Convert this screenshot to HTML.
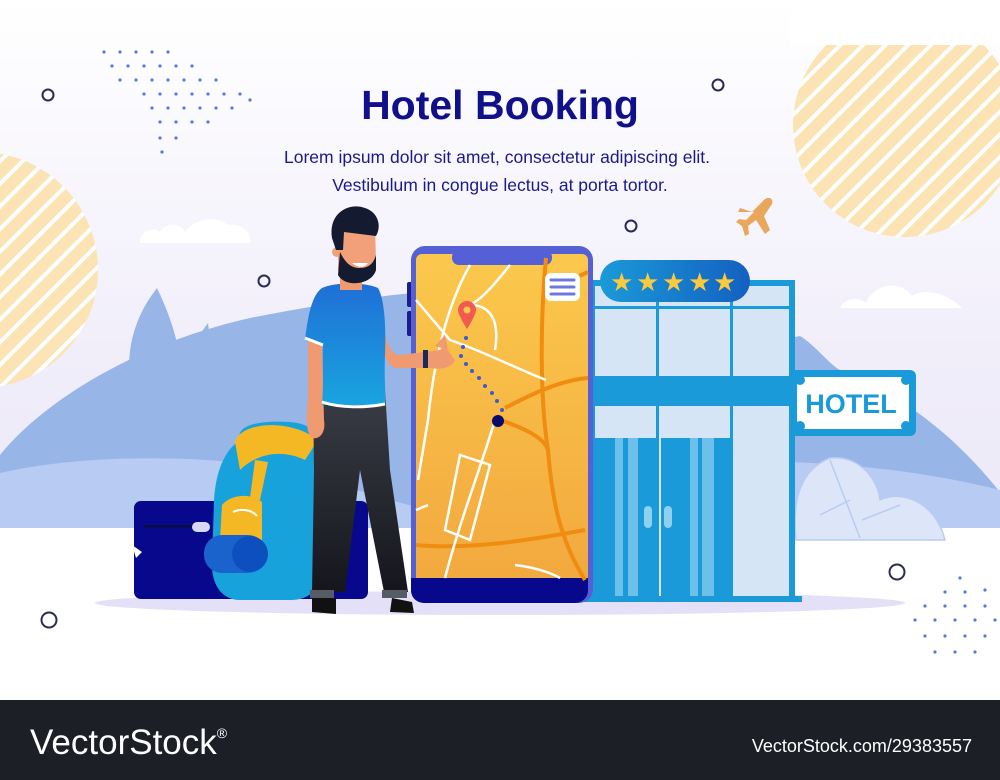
<!DOCTYPE html>
<html><head><meta charset="utf-8"><style>
html,body{margin:0;padding:0;width:1000px;height:780px;overflow:hidden;background:#fff}
svg{display:block}
</style></head><body>
<svg width="1000" height="780" viewBox="0 0 1000 780" xmlns="http://www.w3.org/2000/svg">
<defs>
<linearGradient id="bg" x1="0" y1="0" x2="0" y2="1">
<stop offset="0" stop-color="#ffffff"/><stop offset="0.5" stop-color="#f1eefa"/><stop offset="1" stop-color="#e8e4f6"/></linearGradient>
<pattern id="stripes" width="16" height="16" patternUnits="userSpaceOnUse" patternTransform="rotate(45)">
<rect width="16" height="16" fill="#fbe3b4"/><rect width="4" height="16" fill="#fff"/></pattern>
<linearGradient id="map" x1="0" y1="0" x2="0" y2="1"><stop offset="0" stop-color="#fbc84c"/><stop offset="1" stop-color="#f2a83e"/></linearGradient>
<linearGradient id="shirt" x1="0" y1="0" x2="0" y2="1"><stop offset="0" stop-color="#1f6fd6"/><stop offset="1" stop-color="#19a4e0"/></linearGradient>
<linearGradient id="pants" x1="0" y1="0" x2="0" y2="1"><stop offset="0" stop-color="#3a3d47"/><stop offset="1" stop-color="#15161c"/></linearGradient>
<linearGradient id="stars" x1="0" y1="0" x2="1" y2="0"><stop offset="0" stop-color="#1a9ad8"/><stop offset="1" stop-color="#1460c0"/></linearGradient>
</defs>
<rect width="1000" height="700" fill="url(#bg)"/>
<circle cx="905" cy="125" r="112" fill="url(#stripes)"/>
<rect x="790" y="0" width="210" height="45" fill="#fff"/>
<circle cx="-20" cy="270" r="118" fill="url(#stripes)"/>
<!-- hills -->
<path d="M0,455 C40,405 130,345 250,318 C330,302 400,293 430,292 L430,540 L0,540Z" fill="#98b5e8"/>
<path d="M130,385 C125,340 140,310 157,288 C170,315 178,340 180,362 L208,323 C212,350 205,375 200,390Z" fill="#98b5e8"/>
<path d="M780,340 L800,336 C815,345 830,365 840,370 C900,395 950,430 1000,492 L1000,540 L780,540Z" fill="#98b5e8"/>
<path d="M0,473 C80,455 180,455 260,465 C320,475 380,500 430,510 L430,540 L0,540Z" fill="#b8cbf2"/>
<path d="M790,462 C870,465 940,475 1000,490 L1000,540 L790,540Z" fill="#b8cbf2"/>
<rect y="528" width="1000" height="172" fill="#fff"/>
<path d="M796,540 C792,500 800,470 830,458 C860,455 878,480 880,500 C900,490 935,500 945,540Z" fill="#dce6f8" stroke="#b8cbf2" stroke-width="1.5"/>
<path d="M830,460 L860,538 M850,500 L820,515 M862,520 L900,505" stroke="#b8cbf2" stroke-width="1.5" fill="none"/>
<path d="M140,243 C140,232 152,225 160,232 C165,222 180,222 185,232 C195,218 215,215 228,225 C240,222 252,232 250,243Z" fill="#fff"/>
<path d="M840,308 C845,298 858,296 866,303 C872,285 900,278 912,296 C925,288 945,292 962,308Z" fill="#fff"/>
<g fill="#5a7ad8">
<circle cx="104" cy="52" r="1.6"/><circle cx="120" cy="52" r="1.6"/><circle cx="136" cy="52" r="1.6"/><circle cx="152" cy="52" r="1.6"/><circle cx="168" cy="52" r="1.6"/>
<circle cx="112" cy="66" r="1.6"/><circle cx="128" cy="66" r="1.6"/><circle cx="144" cy="66" r="1.6"/><circle cx="160" cy="66" r="1.6"/><circle cx="176" cy="66" r="1.6"/><circle cx="192" cy="66" r="1.6"/>
<circle cx="120" cy="80" r="1.6"/><circle cx="136" cy="80" r="1.6"/><circle cx="152" cy="80" r="1.6"/><circle cx="168" cy="80" r="1.6"/><circle cx="184" cy="80" r="1.6"/><circle cx="200" cy="80" r="1.6"/><circle cx="216" cy="80" r="1.6"/>
<circle cx="144" cy="94" r="1.6"/><circle cx="160" cy="94" r="1.6"/><circle cx="176" cy="94" r="1.6"/><circle cx="192" cy="94" r="1.6"/><circle cx="208" cy="94" r="1.6"/><circle cx="224" cy="94" r="1.6"/><circle cx="240" cy="94" r="1.6"/>
<circle cx="152" cy="108" r="1.6"/><circle cx="168" cy="108" r="1.6"/><circle cx="184" cy="108" r="1.6"/><circle cx="200" cy="108" r="1.6"/><circle cx="216" cy="108" r="1.6"/><circle cx="232" cy="108" r="1.6"/><circle cx="250" cy="100" r="1.6"/>
<circle cx="160" cy="122" r="1.6"/><circle cx="176" cy="122" r="1.6"/><circle cx="192" cy="122" r="1.6"/><circle cx="208" cy="122" r="1.6"/>
<circle cx="160" cy="138" r="1.6"/><circle cx="176" cy="138" r="1.6"/><circle cx="162" cy="152" r="1.6"/>
<circle cx="960" cy="578" r="1.6"/><circle cx="945" cy="592" r="1.6"/><circle cx="965" cy="592" r="1.6"/><circle cx="985" cy="590" r="1.6"/>
<circle cx="925" cy="606" r="1.6"/><circle cx="945" cy="606" r="1.6"/><circle cx="965" cy="606" r="1.6"/><circle cx="985" cy="606" r="1.6"/>
<circle cx="915" cy="620" r="1.6"/><circle cx="935" cy="620" r="1.6"/><circle cx="955" cy="620" r="1.6"/><circle cx="975" cy="620" r="1.6"/><circle cx="995" cy="620" r="1.6"/>
<circle cx="925" cy="636" r="1.6"/><circle cx="945" cy="636" r="1.6"/><circle cx="965" cy="636" r="1.6"/><circle cx="985" cy="636" r="1.6"/>
<circle cx="935" cy="652" r="1.6"/><circle cx="955" cy="652" r="1.6"/><circle cx="975" cy="652" r="1.6"/>
</g>
<g fill="none" stroke="#2a2a55" stroke-width="2">
<circle cx="48" cy="95" r="5.5"/><circle cx="718" cy="85" r="5.5"/><circle cx="631" cy="226" r="5.5"/><circle cx="264" cy="281" r="5.5"/><circle cx="897" cy="572" r="7.5"/><circle cx="49" cy="620" r="7.5"/>
</g>
<path d="M740,208 L752,212 L764,200 C768,196 774,198 772,204 L764,216 L770,230 L765,234 L756,220 L748,226 L749,234 L745,236 L742,226 L736,222 L739,219 L746,220 L754,212 L738,212Z" fill="#e8a75a"/>
<text x="500" y="119" text-anchor="middle" font-family="Liberation Sans, sans-serif" font-weight="bold" font-size="41" fill="#10108a">Hotel Booking</text>
<text x="497" y="163" text-anchor="middle" font-family="Liberation Sans, sans-serif" font-size="17.5" fill="#1a1a8a">Lorem ipsum dolor sit amet, consectetur adipiscing elit.</text>
<text x="500" y="191" text-anchor="middle" font-family="Liberation Sans, sans-serif" font-size="17.5" fill="#1a1a8a">Vestibulum in congue lectus, at porta tortor.</text>
<ellipse cx="500" cy="603" rx="405" ry="12" fill="#e4e0f8"/>
<!-- hotel -->
<rect x="590" y="280" width="205" height="322" fill="#1a9ad8"/>
<rect x="595" y="286" width="194" height="90" fill="#d6e5f5"/>
<rect x="595" y="406" width="194" height="32" fill="#d6e5f5"/>
<rect x="733" y="406" width="56" height="190" fill="#d6e5f5"/>
<rect x="656" y="286" width="3" height="310" fill="#1a9ad8"/><rect x="730" y="286" width="3" height="310" fill="#1a9ad8"/>
<rect x="595" y="306" width="194" height="3" fill="#1a9ad8"/>
<rect x="659" y="438" width="2" height="158" fill="#d6e5f5"/>
<rect x="615" y="438" width="8" height="158" fill="#6cc0ea"/><rect x="628" y="438" width="10" height="158" fill="#6cc0ea"/>
<rect x="690" y="438" width="8" height="158" fill="#6cc0ea"/><rect x="702" y="438" width="12" height="158" fill="#6cc0ea"/>
<rect x="644" y="506" width="8" height="22" rx="4" fill="#8fd0ef"/><rect x="664" y="506" width="8" height="22" rx="4" fill="#8fd0ef"/>
<rect x="580" y="596" width="222" height="6" fill="#1a9ad8"/>
<rect x="600" y="260" width="150" height="42" rx="21" fill="url(#stars)"/>
<g fill="#fbc93e" font-family="DejaVu Sans, sans-serif" font-size="26">
<text x="610" y="291">★</text><text x="636" y="291">★</text><text x="662" y="291">★</text><text x="688" y="291">★</text><text x="713" y="291">★</text></g>
<rect x="790" y="370" width="126" height="66" rx="6" fill="#1a9ad8"/>
<rect x="797" y="377" width="112" height="52" fill="#fff"/>
<circle cx="800" cy="380" r="5" fill="#1a9ad8"/><circle cx="906" cy="380" r="5" fill="#1a9ad8"/><circle cx="800" cy="426" r="5" fill="#1a9ad8"/><circle cx="906" cy="426" r="5" fill="#1a9ad8"/>
<text x="851" y="413" text-anchor="middle" font-family="Liberation Sans, sans-serif" font-weight="bold" font-size="27" fill="#1a9ad8">HOTEL</text>
<!-- phone -->
<rect x="407" y="282" width="6" height="25" rx="2" fill="#1c1c8c"/><rect x="407" y="311" width="6" height="25" rx="2" fill="#1c1c8c"/>
<rect x="411" y="246" width="182" height="357" rx="14" fill="#5560d6"/>
<rect x="416" y="254" width="172" height="334" rx="6" fill="url(#map)"/>
<path d="M416,578 L588,578 L588,590 C588,598 582,603 574,603 L425,603 C417,603 411,598 411,590 L411,578Z" fill="#08088c"/>
<rect x="452" y="250" width="100" height="15" rx="7" fill="#5560d6"/>
<g fill="none" stroke="#f08c10" stroke-width="4">
<path d="M546,258 C540,320 540,400 548,450 C552,500 560,540 585,580"/>
<path d="M416,545 C470,550 530,540 585,530"/>
<path d="M505,408 C530,395 560,380 588,378"/>
<path d="M500,420 C530,430 545,440 548,450"/>
<path d="M560,285 L588,272"/>
</g>
<g fill="none" stroke="#fff" stroke-width="2.5">
<path d="M470,265 C450,300 435,350 428,420 L418,480"/>
<path d="M510,265 C490,290 480,300 470,305 C490,305 500,320 495,350"/>
<path d="M416,300 L450,340 C480,350 520,370 546,380"/>
<path d="M495,420 C480,470 460,520 445,578"/>
<path d="M460,455 L490,465 L470,540 L445,530Z"/>
<path d="M515,565 C540,568 555,575 560,578"/>
<path d="M416,510 L428,505"/>
</g>
<g fill="#3d5ad6"><circle cx="466" cy="338" r="2"/><circle cx="463" cy="347" r="2"/><circle cx="461" cy="356" r="2"/><circle cx="466" cy="364" r="2"/><circle cx="472" cy="371" r="2"/><circle cx="479" cy="378" r="2"/><circle cx="485" cy="386" r="2"/><circle cx="492" cy="393" r="2"/><circle cx="497" cy="401" r="2"/><circle cx="502" cy="410" r="2"/></g>
<circle cx="498" cy="421" r="6" fill="#0a0a6a"/>
<path d="M467,329 C460,318 458,312 458,310 A9,9 0 1 1 476,310 C476,312 474,318 467,329Z" fill="#f05a50"/>
<circle cx="467" cy="310" r="3.5" fill="#fbc84c"/>
<rect x="545" y="273" width="35" height="28" rx="6" fill="#fff"/>
<g stroke="#6a78e0" stroke-width="3" stroke-linecap="round"><line x1="551" y1="280" x2="574" y2="280"/><line x1="551" y1="287" x2="574" y2="287"/><line x1="551" y1="294" x2="574" y2="294"/></g>
<!-- suitcase -->
<rect x="134" y="501" width="234" height="98" rx="7" fill="#08088c"/>
<rect x="144" y="525" width="60" height="3" fill="#0a0a50"/>
<rect x="192" y="522" width="18" height="10" rx="5" fill="#d8d8f4"/>
<path d="M132,545 L142,552 L136,558Z" fill="#fff"/>
<!-- backpack -->
<path d="M240,440 C235,425 260,420 290,422 C310,424 320,432 318,445 L322,560 C322,590 310,600 290,600 L240,600 C222,600 212,585 212,565 L214,500 C216,470 225,450 240,440Z" fill="#18a2dc"/>
<path d="M235,442 C240,422 290,418 318,440 L305,460 C280,448 255,455 240,470Z" fill="#f4b824"/>
<path d="M255,460 L268,462 L260,500 L250,498Z" fill="#f4b824"/>
<path d="M222,505 C230,495 250,492 262,502 L262,540 L220,540Z" fill="#f4b824"/>
<path d="M233,512 C242,508 252,510 257,516" stroke="#fff" stroke-width="2" fill="none"/>
<rect x="204" y="535" width="62" height="38" rx="18" fill="#1a62cc"/>
<circle cx="250" cy="554" r="18" fill="#0e4fbf"/>
<!-- man -->
<path d="M313,390 L385,390 L390,470 L408,592 L384,592 L360,470 L345,592 L312,592 L314,470Z" fill="url(#pants)"/>
<rect x="310" y="590" width="24" height="8" fill="#555c66"/><rect x="382" y="590" width="25" height="8" fill="#555c66"/>
<path d="M312,598 L336,598 L336,614 L312,612Z" fill="#111"/><path d="M392,598 L412,602 L414,613 L390,612Z" fill="#111"/>
<path d="M308,340 L322,344 L324,420 C326,432 320,440 312,438 C306,432 306,420 308,400Z" fill="#ef9a70"/>
<path d="M383,320 C385,340 390,355 400,355 L440,350 C448,345 450,355 455,360 C452,368 440,370 430,368 L395,368 C385,365 380,345 380,320Z" fill="#ef9a70"/>
<path d="M435,346 L445,335 L448,350Z" fill="#ef9a70"/>
<rect x="423" y="350" width="5" height="18" fill="#1a2a55"/>
<path d="M322,288 C335,282 365,282 378,288 C385,300 386,330 385,355 C384,380 386,395 385,405 L322,405 C324,380 322,360 323,345 L305,340 C308,315 312,295 322,288Z" fill="url(#shirt)"/>
<path d="M305,338 L323,345" stroke="#fff" stroke-width="3"/><path d="M322,402 C340,408 365,408 385,404" stroke="#fff" stroke-width="3" fill="none"/>
<rect x="340" y="268" width="22" height="22" fill="#ef9a70"/>
<path d="M338,225 L375,225 L376,262 C370,280 345,285 338,270Z" fill="#f2a07a"/>
<circle cx="337" cy="252" r="5" fill="#f2a07a"/>
<path d="M340,252 C345,262 350,268 360,268 C370,268 374,262 376,255 L376,270 C372,285 345,288 338,275Z" fill="#141a30"/>
<path d="M352,263 C358,268 365,268 368,263Z" fill="#fff"/>
<path d="M332,238 C328,212 350,202 365,208 C378,212 382,226 376,236 L344,232 L343,250 L336,250Z" fill="#141a30"/>
<!-- footer -->
<rect y="700" width="1000" height="80" fill="#1d1f27"/>
<text x="30" y="754" font-family="Liberation Sans, sans-serif" font-size="35" fill="#fff">VectorStock<tspan font-size="14" dy="-16">®</tspan></text>
<text x="972" y="752" text-anchor="end" font-family="Liberation Sans, sans-serif" font-size="18" fill="#fff">VectorStock.com/29383557</text>
</svg>
</body></html>
